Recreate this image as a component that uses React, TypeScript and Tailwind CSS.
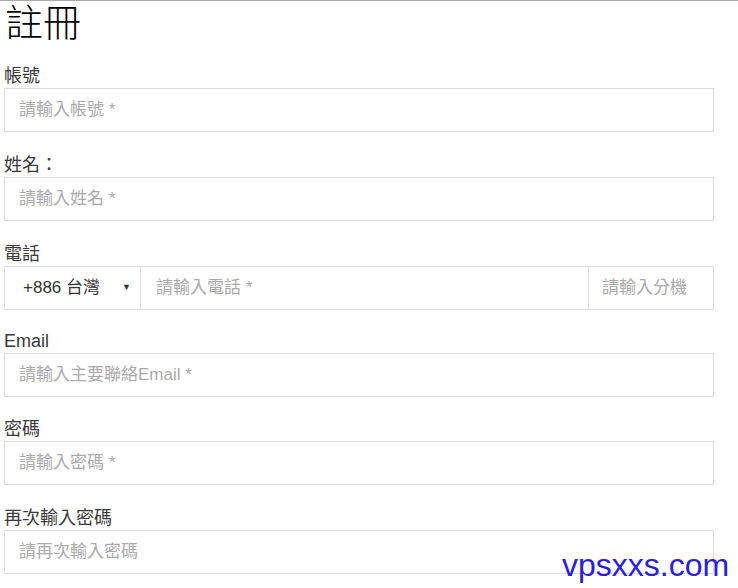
import React from "react";

const cjk = { fontFamily: '"Liberation Sans", Arial, "Noto Sans CJK TC", sans-serif' };

function Field({ label, placeholder, mb }: { label: string; placeholder: string; mb: string }) {
  return (
    <div className={mb}>
      <div className="h-[24px] text-[18px] leading-[24px] text-[#3a3a3a]">{label}</div>
      <div className="h-[44px] border border-[#dcdcdc] flex items-center pl-[14px] text-[17px] text-[#aaa] bg-white">
        {placeholder}
      </div>
    </div>
  );
}

export default function App() {
  return (
    <div className="relative w-[738px] h-[588px] bg-white border-t border-[#a9a9a9] overflow-hidden" style={cjk}>
      <div className="pl-[4px] w-[714px]">
        <div className="h-[63px] text-[38px] leading-[44px] font-light text-black pl-[1px]">註冊</div>
        <Field label="帳號" placeholder="請輸入帳號 *" mb="mb-[21px]" />
        <Field label="姓名：" placeholder="請輸入姓名 *" mb="mb-[21px]" />
        <div className="mb-[19px]">
          <div className="h-[24px] text-[18px] leading-[24px] text-[#3a3a3a]">電話</div>
          <div className="h-[44px] border border-[#dcdcdc] flex bg-white">
            <div className="w-[136px] flex items-center pl-[18px] pr-[9px] text-[17px] text-[#333] border-r border-[#dcdcdc]">
              <span className="flex-1">+886 台灣</span>
              <span className="text-[9px] text-[#333]">▼</span>
            </div>
            <div className="flex-1 flex items-center pl-[15px] text-[17px] text-[#aaa] border-r border-[#dcdcdc]">請輸入電話 *</div>
            <div className="w-[124px] flex items-center pl-[13px] text-[17px] text-[#aaa]">請輸入分機</div>
          </div>
        </div>
        <Field label="Email" placeholder="請輸入主要聯絡Email *" mb="mb-[20px]" />
        <Field label="密碼" placeholder="請輸入密碼 *" mb="mb-[21px]" />
        <Field label="再次輸入密碼" placeholder="請再次輸入密碼" mb="mb-[21px]" />
      </div>
      <div className="absolute left-[562px] top-[544px] text-[32px] leading-[40px] text-[#2a20dc]" style={{ fontFamily: '"Liberation Sans", Arial, sans-serif' }}>
        vpsxxs.com
      </div>
    </div>
  );
}
